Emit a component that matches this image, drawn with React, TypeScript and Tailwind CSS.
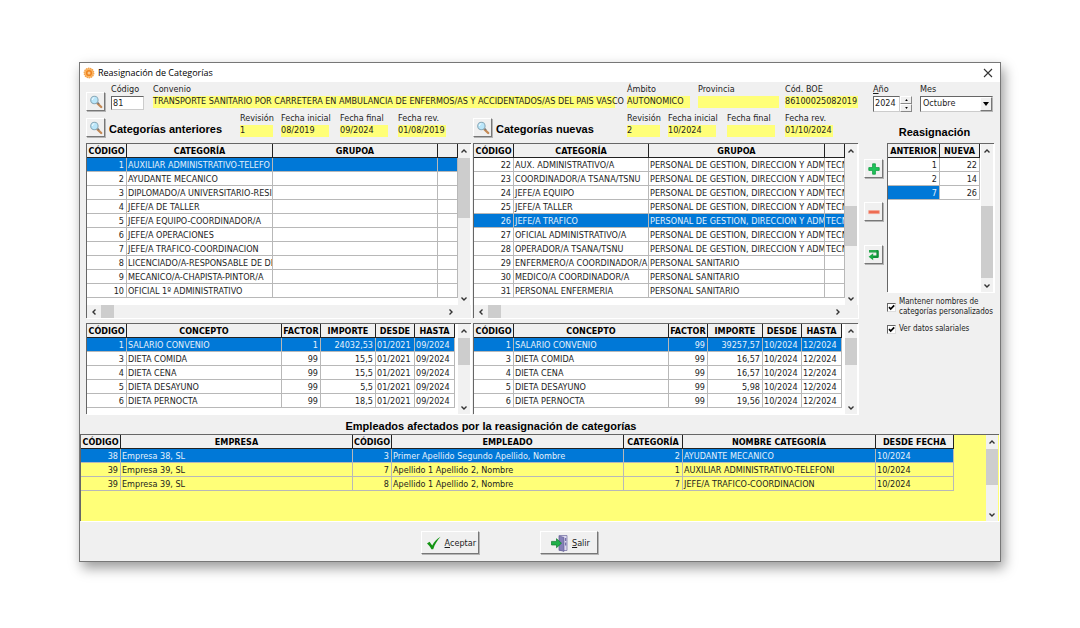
import React from 'react';
import clsx from 'clsx';

type Column = {
  label: string;
  width?: string;
  right?: boolean;
};

const previousCategoryColumns: Column[] = [
  { label: 'CÓDIGO', width: 'w-[40px]', right: true },
  { label: 'CATEGORÍA', width: 'w-[146px]' },
  { label: 'GRUPOA' },
  { label: '', width: 'w-[20px]' },
];

const newCategoryColumns: Column[] = [
  { label: 'CÓDIGO', width: 'w-[40px]', right: true },
  { label: 'CATEGORÍA', width: 'w-[135px]' },
  { label: 'GRUPOA' },
  { label: '', width: 'w-[20px]' },
];

const salaryColumns: Column[] = [
  { label: 'CÓDIGO', width: 'w-[40px]', right: true },
  { label: 'CONCEPTO' },
  { label: 'FACTOR', width: 'w-[39px]', right: true },
  { label: 'IMPORTE', width: 'w-[55px]', right: true },
  { label: 'DESDE', width: 'w-[39px]' },
  { label: 'HASTA', width: 'w-[40px]' },
];

const employeeColumns: Column[] = [
  { label: 'CÓDIGO', width: 'w-[40px]', right: true },
  { label: 'EMPRESA' },
  { label: 'CÓDIGO', width: 'w-[39px]', right: true },
  { label: 'EMPLEADO' },
  { label: 'CATEGORÍA', width: 'w-[59px]', right: true },
  { label: 'NOMBRE CATEGORÍA', width: 'w-[193px]' },
  { label: 'DESDE FECHA', width: 'w-[78px]' },
];

const reassignColumns: Column[] = [
  { label: 'ANTERIOR', right: true },
  { label: 'NUEVA', width: 'w-[40px]', right: true },
];

const previousCategories = [
  ['1', 'AUXILIAR ADMINISTRATIVO-TELEFO', '', ''],
  ['2', 'AYUDANTE MECANICO', '', ''],
  ['3', 'DIPLOMADO/A UNIVERSITARIO-RESI', '', ''],
  ['4', 'JEFE/A DE TALLER', '', ''],
  ['5', 'JEFE/A EQUIPO-COORDINADOR/A', '', ''],
  ['6', 'JEFE/A OPERACIONES', '', ''],
  ['7', 'JEFE/A TRAFICO-COORDINACION', '', ''],
  ['8', 'LICENCIADO/A-RESPONSABLE DE DE', '', ''],
  ['9', 'MECANICO/A-CHAPISTA-PINTOR/A', '', ''],
  ['10', 'OFICIAL 1º ADMINISTRATIVO', '', ''],
];

const MANAGEMENT = 'PERSONAL DE GESTION, DIRECCION Y ADMI';
const HEALTH = 'PERSONAL SANITARIO';

const newCategories = [
  ['22', 'AUX. ADMINISTRATIVO/A', MANAGEMENT, 'TECN'],
  ['23', 'COORDINADOR/A TSANA/TSNU', MANAGEMENT, 'TECN'],
  ['24', 'JEFE/A EQUIPO', MANAGEMENT, 'TECN'],
  ['25', 'JEFE/A TALLER', MANAGEMENT, 'TECN'],
  ['26', 'JEFE/A TRAFICO', MANAGEMENT, 'TECN'],
  ['27', 'OFICIAL ADMINISTRATIVO/A', MANAGEMENT, 'TECN'],
  ['28', 'OPERADOR/A TSANA/TSNU', MANAGEMENT, 'TECN'],
  ['29', 'ENFERMERO/A COORDINADOR/A', HEALTH, ''],
  ['30', 'MEDICO/A COORDINADOR/A', HEALTH, ''],
  ['31', 'PERSONAL ENFERMERIA', HEALTH, ''],
];

const previousSalaries = [
  ['1', 'SALARIO CONVENIO', '1', '24032,53', '01/2021', '09/2024'],
  ['3', 'DIETA COMIDA', '99', '15,5', '01/2021', '09/2024'],
  ['4', 'DIETA CENA', '99', '15,5', '01/2021', '09/2024'],
  ['5', 'DIETA DESAYUNO', '99', '5,5', '01/2021', '09/2024'],
  ['6', 'DIETA PERNOCTA', '99', '18,5', '01/2021', '09/2024'],
];

const newSalaries = [
  ['1', 'SALARIO CONVENIO', '99', '39257,57', '10/2024', '12/2024'],
  ['3', 'DIETA COMIDA', '99', '16,57', '10/2024', '12/2024'],
  ['4', 'DIETA CENA', '99', '16,57', '10/2024', '12/2024'],
  ['5', 'DIETA DESAYUNO', '99', '5,98', '10/2024', '12/2024'],
  ['6', 'DIETA PERNOCTA', '99', '19,56', '10/2024', '12/2024'],
];

const employees = [
  ['38', 'Empresa 38, SL', '3', 'Primer Apellido Segundo Apellido, Nombre', '2', 'AYUDANTE MECANICO', '10/2024'],
  ['39', 'Empresa 39, SL', '7', 'Apellido 1 Apellido 2, Nombre', '1', 'AUXILIAR ADMINISTRATIVO-TELEFONI', '10/2024'],
  ['39', 'Empresa 39, SL', '8', 'Apellido 1 Apellido 2, Nombre', '7', 'JEFE/A TRAFICO-COORDINACION', '10/2024'],
];

const reassignments = [
  ['1', '22'],
  ['2', '14'],
  ['7', '26'],
];

const raised =
  'bg-[#f0f0f0] border border-t-white border-l-white border-r-[#777] border-b-[#777] shadow-[1px_1px_0_#b5b5b5]';

const Chevron = ({ className }: { className?: string }) => (
  <svg viewBox="0 0 8 8" className={clsx('h-2 w-2', className)} fill="none" stroke="#333" strokeWidth="1.4">
    <path d="M1.5 5.5 4 3l2.5 2.5" />
  </svg>
);

const VerticalScroll = ({ thumb }: { thumb: string }) => (
  <div aria-hidden="true" className="mr-px flex w-3 shrink-0 flex-col items-center bg-[#f1f1f1]">
    <div className="flex h-3.5 items-center">
      <Chevron />
    </div>
    <div className="w-full flex-1">
      <div className={clsx('w-full bg-[#cdcdcd]', thumb)}></div>
    </div>
    <div className="flex h-3 items-center">
      <Chevron className="rotate-180" />
    </div>
  </div>
);

const HorizontalScroll = () => (
  <div aria-hidden="true" className="flex h-[13px] items-center bg-[#f1f1f1] pl-[3px] pr-4">
    <Chevron className="-rotate-90" />
    <div className="mx-[3px] h-full flex-1">
      <div className="h-full w-[13px] bg-[#cdcdcd]"></div>
    </div>
    <Chevron className="rotate-90" />
  </div>
);

type DataTableProps = {
  label: string;
  columns: Column[];
  rows: string[][];
  selectedRow?: number;
  selectedCell?: [number, number];
};

const DataTable = ({ label, columns, rows, selectedRow, selectedCell }: DataTableProps) => (
  <table aria-label={label} className="w-full table-fixed border-separate border-spacing-0">
    <thead>
      <tr>
        {columns.map((col, i) => (
          <th
            key={i}
            className={clsx(
              'h-3.5 overflow-hidden whitespace-nowrap border-b border-r border-[#222] bg-[#f0f0f0] px-0 pb-0 pt-px text-center leading-[12px] font-bold text-black',
              col.width
            )}
          >
            {col.label}
          </th>
        ))}
      </tr>
    </thead>
    <tbody>
      {rows.map((row, r) => (
        <tr key={r}>
          {row.map((cell, c) => {
            const selected = selectedRow === r || (selectedCell?.[0] === r && selectedCell?.[1] === c);
            return (
              <td
                key={c}
                className={clsx(
                  'h-3.5 overflow-hidden whitespace-nowrap border-b border-r border-[#b8b8b8] pb-0 pl-px pt-px leading-[12px]',
                  columns[c].right ? 'pr-0.5 text-right' : 'pr-0 text-left',
                  selected && 'bg-[#0078d7] text-[#e4f1fc]'
                )}
              >
                {cell}
              </td>
            );
          })}
        </tr>
      ))}
    </tbody>
  </table>
);

const Pane = ({ children, className }: { children: React.ReactNode; className?: string }) => (
  <div className={clsx('flex border-l border-t border-[#666] shadow-[1px_1px_0_#fff]', className)}>{children}</div>
);

const Field = ({ label, value, className }: { label: string; value?: string; className?: string }) => (
  <div className={clsx('min-w-0 shrink-0', className)}>
    <div className="whitespace-nowrap leading-[13px]">{label}</div>
    <div className="h-3 whitespace-nowrap bg-[#ffff78] leading-[10px]">{value}</div>
  </div>
);

const SearchButton = ({ label }: { label: string }) => (
  <button aria-label={label} className={clsx('flex h-[19px] w-[19px] shrink-0 items-center justify-center', raised)}>
    <svg viewBox="0 0 14 14" className="h-3.5 w-3.5" fill="none">
      <path d="m8 8 4.2 4" stroke="#c58a55" strokeWidth="2.4" strokeLinecap="round" />
      <path d="m8.6 7.4 1.6 1.5" stroke="#777" strokeWidth="1.4" />
      <circle cx="5.4" cy="5" r="3.7" fill="#b9e6fa" stroke="#8aa9b8" strokeWidth="1.1" />
      <path d="M3.3 5c0-1.3.8-2.1 2-2.2" stroke="#fff" strokeWidth="1" />
    </svg>
  </button>
);

const SmallButton = ({ label, children }: { label: string; children: React.ReactNode }) => (
  <button aria-label={label} className={clsx('flex h-[19px] w-[19px] items-center justify-center', raised)}>
    {children}
  </button>
);

type CategoryHeaderProps = {
  title: string;
  revision: string;
  start: string;
  end: string;
  reviewed: string;
};

const CategoryHeader = ({ title, revision, start, end, reviewed }: CategoryHeaderProps) => (
  <div className="flex items-end pr-[25px]">
    <SearchButton label={`Buscar ${title}`} />
    <h2 className="min-w-0 flex-1 whitespace-nowrap pb-0.5 pl-1 font-['Liberation_Sans',Arial,sans-serif] text-[11px] leading-3 font-bold text-black">
      {title}
    </h2>
    <Field label="Revisión" value={revision} className="w-[33px]" />
    <Field label="Fecha inicial" value={start} className="ml-2 w-12" />
    <Field label="Fecha final" value={end} className="ml-[11px] w-12" />
    <Field label="Fecha rev." value={reviewed} className="ml-2.5 w-12" />
  </div>
);

const CheckOption = ({ id, children }: { id: string; children: React.ReactNode }) => (
  <div className="flex items-center gap-[3px]">
    <span className="relative flex h-[9px] w-[9px] shrink-0">
      <input
        id={id}
        type="checkbox"
        defaultChecked
        className="peer h-[9px] w-[9px] appearance-none border border-b-[#ddd] border-l-[#666] border-r-[#ddd] border-t-[#666] bg-white"
      />
      <svg
        viewBox="0 0 9 9"
        className="pointer-events-none absolute inset-0 hidden h-[9px] w-[9px] peer-checked:block"
        fill="none"
        stroke="#000"
        strokeWidth="1.7"
      >
        <path d="M2 4.2 3.7 6 7.2 2.3" />
      </svg>
    </span>
    <label htmlFor={id} className="whitespace-nowrap text-[8px] leading-[10px]">
      {children}
    </label>
  </div>
);

const TitleBar = () => (
  <header className="flex h-[19px] items-center bg-white pl-[3px] pr-1.5">
    <svg viewBox="0 0 12 12" className="h-3 w-3">
      <circle cx="6" cy="6" r="4.8" fill="#f9b766" stroke="#f5a04a" strokeWidth="1.2" strokeDasharray="1.4 .7" />
      <circle cx="6" cy="6" r="3.1" fill="#ef8420" />
      <circle cx="6" cy="6" r="1.5" fill="#fbc98c" />
    </svg>
    <h1 className="flex-1 pl-[3px] font-['Open_Sans','Noto_Sans',sans-serif] leading-3 text-black">
      Reasignación de Categorías
    </h1>
    <button aria-label="Cerrar" className="flex h-3 w-3 items-center justify-center">
      <svg viewBox="0 0 10 10" className="h-2.5 w-2.5" stroke="#333" strokeWidth="1.1">
        <path d="m1 1 8 8M9 1 1 9" />
      </svg>
    </button>
  </header>
);

const PeriodPicker = () => (
  <div className="flex gap-2 pl-[9px] pr-px">
    <div>
      <label htmlFor="year" className="block leading-[13px]">
        <u>A</u>ño
      </label>
      <div className="flex h-4">
        <input
          id="year"
          defaultValue="2024"
          className="w-[27px] border border-b-[#ccc] border-l-[#666] border-r-[#ccc] border-t-[#666] bg-white pl-px"
        />
        <div className="flex w-3 flex-col">
          <button
            aria-label="Año siguiente"
            className="flex h-2 items-center justify-center border border-b-[#888] border-l-white border-r-[#888] border-t-white"
          >
            <svg viewBox="0 0 4 3" className="h-0.5 w-[3px]">
              <path d="M0 3 2 0l2 3z" />
            </svg>
          </button>
          <button
            aria-label="Año anterior"
            className="flex h-2 items-center justify-center border border-b-[#888] border-l-white border-r-[#888] border-t-white"
          >
            <svg viewBox="0 0 4 3" className="h-0.5 w-[3px]">
              <path d="M0 0 2 3l2-3z" />
            </svg>
          </button>
        </div>
      </div>
    </div>
    <div className="flex-1">
      <label htmlFor="month" className="block leading-[13px]">
        Mes
      </label>
      <div className="relative h-4">
        <select
          id="month"
          defaultValue="Octubre"
          className="h-4 w-full appearance-none border border-b-[#ccc] border-l-[#666] border-r-[#ccc] border-t-[#666] bg-white pl-0.5"
        >
          <option>Septiembre</option>
          <option>Octubre</option>
          <option>Noviembre</option>
        </select>
        <span className={clsx('pointer-events-none absolute inset-y-px right-px flex w-3 items-center justify-center', raised)}>
          <svg viewBox="0 0 6 4" className="h-1 w-1.5">
            <path d="M0 0h6L3 4z" />
          </svg>
        </span>
      </div>
    </div>
  </div>
);

const Reassignment = () => (
  <div className="mt-3.5 flex gap-1">
    <div className="flex flex-col gap-6 pt-[33px]">
      <SmallButton label="Añadir">
        <svg viewBox="0 0 12 12" className="h-3 w-3">
          <path d="M4.6.8h2.8v3.8h3.8v2.8H7.4v3.8H4.6V7.4H.8V4.6h3.8z" fill="#1fc45b" stroke="#109a40" strokeWidth=".8" />
        </svg>
      </SmallButton>
      <SmallButton label="Quitar">
        <svg viewBox="0 0 12 12" className="h-3 w-3">
          <path d="M.7 4.6h10.6v3H.7z" fill="#ee6a50" stroke="#f3a08e" strokeWidth=".7" />
        </svg>
      </SmallButton>
      <SmallButton label="Deshacer">
        <svg viewBox="0 0 12 12" className="h-3 w-3" fill="none">
          <path d="M1 2.3h8.6v5.5H4" stroke="#0f9238" strokeWidth="2.4" strokeLinejoin="round" />
          <path d="M5.2 4.3v7L.6 7.8z" fill="#17a844" />
          <path d="M1 2h7.5" stroke="#4cd070" strokeWidth=".8" />
        </svg>
      </SmallButton>
    </div>
    <div className="min-w-0 flex-1">
      <h2 className="pr-3 text-center font-['Liberation_Sans',Arial,sans-serif] text-[11px] leading-3 font-bold text-black">
        Reasignación
      </h2>
      <Pane className="mt-[5px] h-[149px] bg-white">
        <div className="min-w-0 flex-1 pr-px">
          <DataTable label="Reasignación" columns={reassignColumns} rows={reassignments} selectedCell={[2, 0]} />
        </div>
        <VerticalScroll thumb="mt-12 h-[72px]" />
      </Pane>
      <div className="mt-[5px] flex flex-col gap-[7px]">
        <CheckOption id="keep-names">
          Mantener nombres de
          <br />
          categorías personalizados
        </CheckOption>
        <CheckOption id="show-salaries">Ver datos salariales</CheckOption>
      </div>
    </div>
  </div>
);

type CategoryPanelProps = {
  name: string;
  columns: Column[];
  categories: string[][];
  salaries: string[][];
  selected: number;
  thumb: string;
};

const CategoryPanel = ({ name, columns, categories, salaries, selected, thumb }: CategoryPanelProps) => (
  <div className="min-w-0">
    <Pane className="h-[175px] bg-white">
      <div className="flex min-w-0 flex-1 flex-col">
        <div className="flex min-h-0 flex-1">
          <div className="min-w-0 flex-1">
            <DataTable label={`Categorías ${name}`} columns={columns} rows={categories} selectedRow={selected} />
          </div>
          <VerticalScroll thumb={thumb} />
        </div>
        <HorizontalScroll />
      </div>
    </Pane>
    <Pane className="mt-[5px] h-[91px] bg-white">
      <div className="min-w-0 flex-1 pr-[3px]">
        <DataTable label={`Salarios ${name}`} columns={salaryColumns} rows={salaries} selectedRow={0} />
      </div>
      <VerticalScroll thumb="h-[27px]" />
    </Pane>
  </div>
);

export default function App() {
  return (
    <div className="min-h-screen bg-white px-[79px] py-[62px] font-['DejaVu_Sans_Condensed','DejaVu_Sans',sans-serif] text-[9px] text-[#1c1c1c]">
      <main className="border border-[#777] bg-[#f0f0f0] shadow-[3px_6px_12px_rgba(0,0,0,0.4)]">
        <TitleBar />

        <div className="flex gap-1.5 px-1.5 pt-px">
          <div className="min-w-0 flex-1">
            <div className="flex h-7">
              <div className="pt-[9px]">
                <SearchButton label="Buscar convenio" />
              </div>
              <div className="ml-1.5 w-[33px] shrink-0">
                <label htmlFor="code" className="block leading-[13px]">
                  Código
                </label>
                <input
                  id="code"
                  defaultValue="81"
                  className="block h-3.5 w-full border border-b-[#ccc] border-l-[#666] border-r-[#ccc] border-t-[#666] bg-white pl-px"
                />
              </div>
              <Field
                label="Convenio"
                value="TRANSPORTE SANITARIO POR CARRETERA EN AMBULANCIA DE ENFERMOS/AS Y ACCIDENTADOS/AS DEL PAIS VASCO"
                className="ml-[9px] flex-1"
              />
              <Field label="Ámbito" value="AUTONOMICO" className="ml-3 w-[63px]" />
              <Field label="Provincia" className="ml-2 w-[81px]" />
              <Field label="Cód. BOE" value="86100025082019" className="ml-1.5 w-[73px]" />
            </div>

            <div className="mt-px grid grid-cols-2 gap-0.5">
              <CategoryHeader title="Categorías anteriores" revision="1" start="08/2019" end="09/2024" reviewed="01/08/2019" />
              <CategoryHeader title="Categorías nuevas" revision="2" start="10/2024" end="" reviewed="01/10/2024" />
            </div>

            <div className="mt-1.5 grid grid-cols-2 gap-0.5">
              <CategoryPanel
                name="anteriores"
                columns={previousCategoryColumns}
                categories={previousCategories}
                salaries={previousSalaries}
                selected={0}
                thumb="h-[60px]"
              />
              <CategoryPanel
                name="nuevas"
                columns={newCategoryColumns}
                categories={newCategories}
                salaries={newSalaries}
                selected={4}
                thumb="mt-12 h-10"
              />
            </div>
          </div>

          <aside className="w-[130px] shrink-0">
            <PeriodPicker />
            <Reassignment />
          </aside>
        </div>

        <h2 className="pr-[98px] pt-1.5 text-center font-['Liberation_Sans',Arial,sans-serif] text-[11px] leading-3 font-bold text-black">
          Empleados afectados por la reasignación de categorías
        </h2>
        <Pane className="mt-0.5 mr-px h-[87px] bg-[#ffff78]">
          <div className="min-w-0 flex-1 pr-8">
            <DataTable label="Empleados afectados" columns={employeeColumns} rows={employees} selectedRow={0} />
          </div>
          <VerticalScroll thumb="h-9" />
        </Pane>

        <div className="flex justify-center gap-[61px] pb-[7px] pr-[61px] pt-2.5">
          <button className={clsx('flex h-[23px] w-[58px] items-center justify-between pl-1 pr-0.5', raised)}>
            <svg viewBox="0 0 16 14" className="h-3.5 w-4" fill="#149414">
              <path d="M1 7.5 3.5 5.8l2.7 3.7C8.2 5.7 10.8 2.7 14.5.8c-3.2 3.6-5.6 7.4-7.3 12.4H5.4C4.2 10.8 2.8 9 1 7.5z" />
            </svg>
            <span className="pt-0.5">
              <u>A</u>ceptar
            </span>
          </button>
          <button className={clsx('flex h-[23px] w-[58px] items-center gap-1 pl-2.5', raised)}>
            <svg viewBox="0 0 17 18" className="h-[18px] w-[17px]">
              <path d="M8 1.5h8v15H8z" fill="#ddd9f0" stroke="#7c78a8" strokeWidth=".8" />
              <path d="m8.4 2 4.6 1.5v14L8.4 16z" fill="#8580b8" stroke="#5e5a90" strokeWidth=".6" />
              <path d="M14 4h1.3v3H14zM14 8.5h1.3v3H14z" fill="#7772a8" />
              <path d="M.5 7.4h5V4.7l5 4.5-5 4.5V11h-5z" fill="#20b04a" stroke="#0e7c2c" strokeWidth=".7" />
            </svg>
            <span className="pt-0.5">
              <u>S</u>alir
            </span>
          </button>
        </div>
      </main>
    </div>
  );
}
